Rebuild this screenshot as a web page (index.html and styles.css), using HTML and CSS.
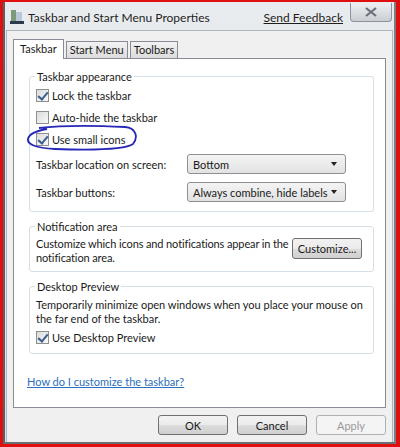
FILE: index.html
```html
<!DOCTYPE html>
<html>
<head>
<meta charset="utf-8">
<link rel="stylesheet" href="styles.css">
</head>
<body>
<div class="screen">
  <div class="window">
    <div class="titlebar">
      <div class="app-icon">
        <svg width="14" height="16" viewBox="0 0 14 16">
          <rect x="1" y="1" width="5" height="11" fill="#7a9a7a"/>
          <rect x="6" y="3" width="6" height="9" fill="#b8c8d8"/>
          <rect x="0" y="12" width="14" height="3" fill="#2a3a4a"/>
        </svg>
      </div>
      <div class="title">Taskbar and Start Menu Properties</div>
      <div class="feedback">Send Feedback</div>
      <div class="close">
        <svg width="12" height="10" viewBox="0 0 12 10"><path d="M1 1 L11 9 M11 1 L1 9" stroke="#6a6f78" stroke-width="2.2"/></svg>
      </div>
    </div>
    <div class="client">
      <div class="tabs">
        <div class="tab active">Taskbar</div>
        <div class="tab">Start Menu</div>
        <div class="tab">Toolbars</div>
      </div>
      <div class="panel">
        <fieldset class="group g1">
          <legend>Taskbar appearance</legend>
          <div class="check-row"><span class="cb checked"></span>Lock the taskbar</div>
          <div class="check-row"><span class="cb"></span>Auto-hide the taskbar</div>
          <div class="check-row circled"><span class="cb checked"></span>Use small icons
            <svg class="scribble" width="116" height="28" viewBox="0 0 116 28">
              <path d="M14 4 C 40 1, 80 2, 100 3 C 112 4, 113 14, 108 20 C 100 26, 60 26, 30 25 C 10 24, 2 20, 3 15 C 4 10, 10 7, 22 5" fill="none" stroke="#2828b8" stroke-width="1.8"/>
            </svg>
          </div>
          <div class="field-row">
            <span class="field-label">Taskbar location on screen:</span>
            <div class="select">Bottom<span class="arrow"></span></div>
          </div>
          <div class="field-row">
            <span class="field-label">Taskbar buttons:</span>
            <div class="select">Always combine, hide labels<span class="arrow"></span></div>
          </div>
        </fieldset>
        <fieldset class="group g2">
          <legend>Notification area</legend>
          <div class="notif">
            <p class="desc">Customize which icons and notifications appear in the<br>notification area.</p>
            <div class="btn customize">Customize...</div>
          </div>
        </fieldset>
        <fieldset class="group g3">
          <legend>Desktop Preview</legend>
          <p class="desc">Temporarily minimize open windows when you place your mouse on the far end of the taskbar.</p>
          <div class="check-row last"><span class="cb checked"></span>Use Desktop Preview</div>
        </fieldset>
        <div class="help-link">How do I customize the taskbar?</div>
      </div>
      <div class="buttons">
        <div class="btn dlg">OK</div>
        <div class="btn dlg">Cancel</div>
        <div class="btn dlg disabled">Apply</div>
      </div>
    </div>
  </div>
</div>
</body>
</html>
```
FILE: styles.css
```css
* { box-sizing: border-box; }
html, body { margin: 0; padding: 0; }
body {
  width: 400px;
  height: 447px;
  overflow: hidden;
  font-family: Lato, "Noto Sans", sans-serif;
  font-size: 11px;
  color: #1a1a1a;
}
.screen {
  width: 400px;
  height: 447px;
  background: #e01010;
  padding: 2px 4px 3px 3px;
}
.window {
  width: 100%;
  height: 100%;
  background: linear-gradient(#e9ecef, #dde2e6);
  border-left: 2px solid #5a5f64;
  border-right: 2px solid #7a7f84;
  border-bottom: 2px solid #6a6f74;
  display: flex;
  flex-direction: column;
}
.titlebar {
  height: 28px;
  display: flex;
  align-items: center;
  padding-left: 5px;
  position: relative;
}
.app-icon { width: 16px; height: 16px; margin-top: 2px; }
.title {
  margin-left: 2px;
  font-size: 12px;
  color: #1e1e1e;
  margin-top: 2px;
}
.feedback {
  margin-left: auto;
  font-size: 12px;
  text-decoration: underline;
  color: #1e1e1e;
  margin-top: 2px;
  margin-right: 7px;
}
.close {
  width: 42px;
  height: 19px;
  margin-right: 2px;
  margin-top: -8px;
  border: 1px solid #8d939a;
  border-top: none;
  border-radius: 0 0 4px 4px;
  background: linear-gradient(#eef0f2, #c9ced3);
  display: flex;
  align-items: center;
  justify-content: center;
}
.client {
  flex: 1;
  margin: 0 1px 0 1px;
  background: #f0f0f0;
  border: 1px solid #b0b5ba;
  border-bottom: none;
  padding: 8px 6px 0 6px;
  display: flex;
  flex-direction: column;
}
.tabs {
  display: flex;
  height: 19px;
  align-items: flex-end;
  position: relative;
  z-index: 1;
}
.tab {
  height: 17px;
  padding: 0 3px;
  border: 1px solid #898c95;
  border-bottom: none;
  background: linear-gradient(#f2f2f2, #dcdcdc);
  line-height: 16px;
  font-size: 11px;
}
.tab.active {
  background: #fff;
  padding: 0 6px;
  line-height: 18px;
  margin-bottom: -1px;
  height: 20px;
}
.tab + .tab { margin-left: 2px; }
.panel {
  width: 373px;
  height: 350px;
  background: #fff;
  border: 1px solid #898c95;
  padding: 11px 11px 0 15px;
  display: flex;
  flex-direction: column;
}
.group {
  margin: 0;
  border: 1px solid #d5dfe5;
  border-radius: 3px;
  padding: 0 6px 0 6px;
  min-width: 0;
}
.group legend {
  padding: 0 2px;
  margin-left: -1px;
  font-size: 11px;
  color: #1a1a1a;
}
.g1 { height: 142px; }
.g2 { height: 52px; margin-top: 8px; }
.g3 { height: 74px; margin-top: 8px; }
.check-row {
  display: flex;
  align-items: center;
  height: 22px;
  font-size: 11px;
  position: relative;
}
.g1 .check-row:first-of-type { margin-top: 1px; }
.cb {
  width: 13px;
  height: 13px;
  border: 1px solid #8e8f8f;
  background: linear-gradient(135deg, #dcdcdc, #f8f8f8);
  margin-right: 3px;
  position: relative;
  flex: none;
}
.cb.checked::after {
  content: "";
  position: absolute;
  left: 3px;
  top: 0px;
  width: 4px;
  height: 8px;
  border-right: 2px solid #3c5e8c;
  border-bottom: 2px solid #3c5e8c;
  transform: rotate(40deg);
}
.scribble {
  position: absolute;
  left: -11px;
  top: -4px;
}
.field-row {
  display: flex;
  align-items: center;
  height: 28px;
  font-size: 11px;
}
.field-row:first-of-type { margin-top: 1px; }
.field-label { width: 151px; }
.select {
  width: 159px;
  height: 20px;
  border: 1px solid #8c8f94;
  border-radius: 3px;
  background: linear-gradient(#f4f4f4, #e2e2e2);
  display: flex;
  align-items: center;
  padding-left: 5px;
  position: relative;
  font-size: 11px;
}
.arrow {
  position: absolute;
  right: 8px;
  top: 7px;
  width: 0;
  height: 0;
  border-left: 3.5px solid transparent;
  border-right: 3.5px solid transparent;
  border-top: 4px solid #222;
}
.desc {
  margin: 0;
  font-size: 11px;
  line-height: 13.5px;
}
.notif {
  display: flex;
  align-items: flex-start;
  margin-top: 4px;
}
.notif .desc {
  flex: 1;
  min-width: 0;
  white-space: nowrap;
  letter-spacing: -0.12px;
}
.btn {
  border: 1px solid #707070;
  border-radius: 3px;
  background: linear-gradient(#f2f2f2 0%, #ebebeb 50%, #dddddd 51%, #cfcfcf 100%);
  display: flex;
  align-items: center;
  justify-content: center;
  font-size: 11px;
  color: #1a1a1a;
}
.customize {
  flex: none;
  width: 70px;
  height: 21px;
  margin-top: 1px;
  margin-right: 5px;
}
.g3 .desc { margin-top: 5px; }
.check-row.last { margin-top: 1px; }
.help-link {
  margin-top: 21px;
  margin-left: -2px;
  text-decoration: underline;
  font-size: 11px;
  color: #2a6fbd;
}
.buttons {
  display: flex;
  justify-content: flex-end;
  gap: 9px;
  padding-top: 7px;
  padding-right: 0;
}
.btn.dlg {
  width: 70px;
  height: 20px;
}
.btn.disabled {
  color: #9a9a9a;
  border-color: #adb2b5;
  background: #f4f4f4;
}
```
